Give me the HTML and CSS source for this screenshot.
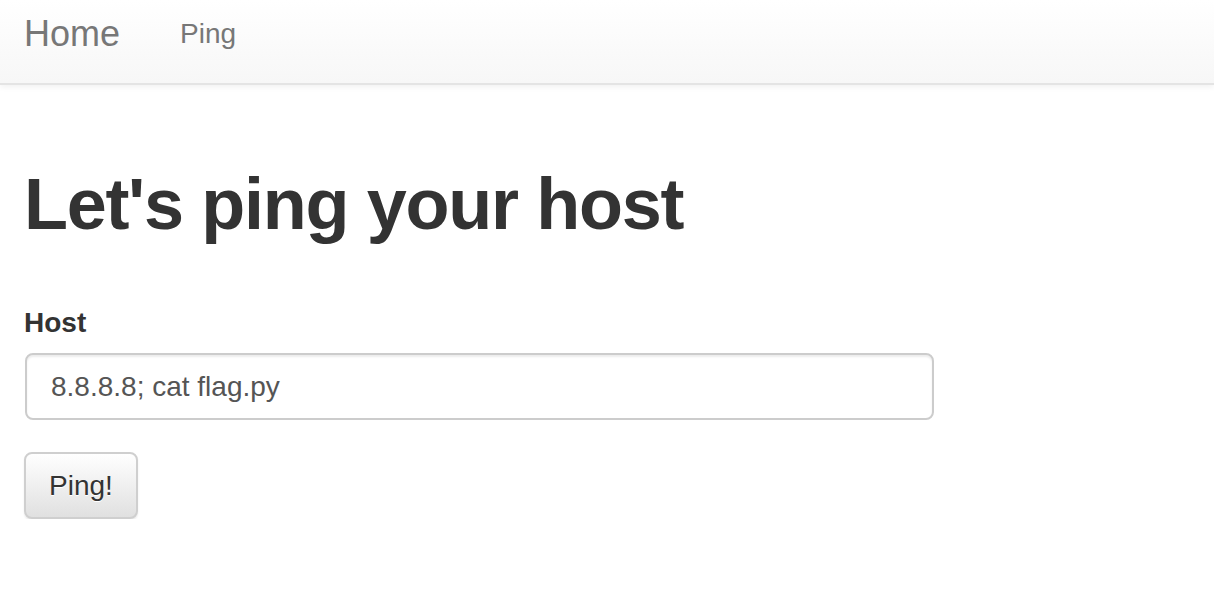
FILE: index.html
```html
<!DOCTYPE html>
<html lang="en">
<head>
<meta charset="utf-8">
<title>Ping</title>
<link rel="stylesheet" href="styles.css">
</head>
<body>
<nav class="navbar">
  <a class="brand" href="#">Home</a>
  <a class="nav-link" href="#">Ping</a>
</nav>
<main class="container">
  <h1 class="title">Let's ping your host</h1>
  <form class="form">
    <div class="form-group">
      <label class="label" for="host">Host</label>
      <input class="input" id="host" type="text" value="8.8.8.8; cat flag.py">
    </div>
    <button class="btn" type="button">Ping!</button>
  </form>
</main>
</body>
</html>
```

FILE: styles.css
```css
html, body {
  margin: 0;
  padding: 0;
  background: #fff;
}

body {
  font-family: "Liberation Sans", Arial, sans-serif;
  color: #333;
}

.navbar {
  display: flex;
  align-items: flex-start;
  box-sizing: border-box;
  height: 85px;
  padding: 14px 24px 0;
  background-image: linear-gradient(to bottom, #ffffff 0%, #f7f7f7 100%);
  border-bottom: 2px solid #e4e4e4;
  box-shadow: 0 2px 6px rgba(0, 0, 0, 0.06);
}

.brand {
  font-size: 36px;
  line-height: 40px;
  color: #777;
  text-decoration: none;
  margin-right: 60px;
}

.nav-link {
  font-size: 28px;
  line-height: 40px;
  color: #777;
  text-decoration: none;
}

.container {
  padding: 0 24px;
}

.title {
  margin: 80px 0 59px;
  font-size: 72px;
  line-height: 79px;
  font-weight: bold;
  letter-spacing: -1.3px;
  color: #333;
}

.form {
  margin: 0;
}

.form-group {
  margin-bottom: 32px;
}

.label {
  display: block;
  font-size: 28px;
  line-height: 40px;
  font-weight: bold;
  color: #333;
  margin-bottom: 10px;
}

.input {
  display: block;
  box-sizing: border-box;
  width: 909px;
  height: 67px;
  margin: 0 0 0 1px;
  padding: 0 24px;
  font-family: "Liberation Sans", Arial, sans-serif;
  font-size: 28px;
  color: #555;
  background: #fff;
  border: 2px solid #ccc;
  border-radius: 8px;
  box-shadow: inset 0 2px 2px rgba(0, 0, 0, 0.075);
  outline: none;
}

.btn {
  display: block;
  box-sizing: border-box;
  width: 114px;
  height: 67px;
  padding: 0;
  font-family: "Liberation Sans", Arial, sans-serif;
  font-size: 28px;
  color: #333;
  text-shadow: 0 1px 0 #fff;
  background-image: linear-gradient(to bottom, #ffffff 0%, #e0e0e0 100%);
  border: 2px solid #cfcfcf;
  border-radius: 8px;
  box-shadow: 0 2px 2px rgba(0, 0, 0, 0.075);
  cursor: pointer;
}
```
